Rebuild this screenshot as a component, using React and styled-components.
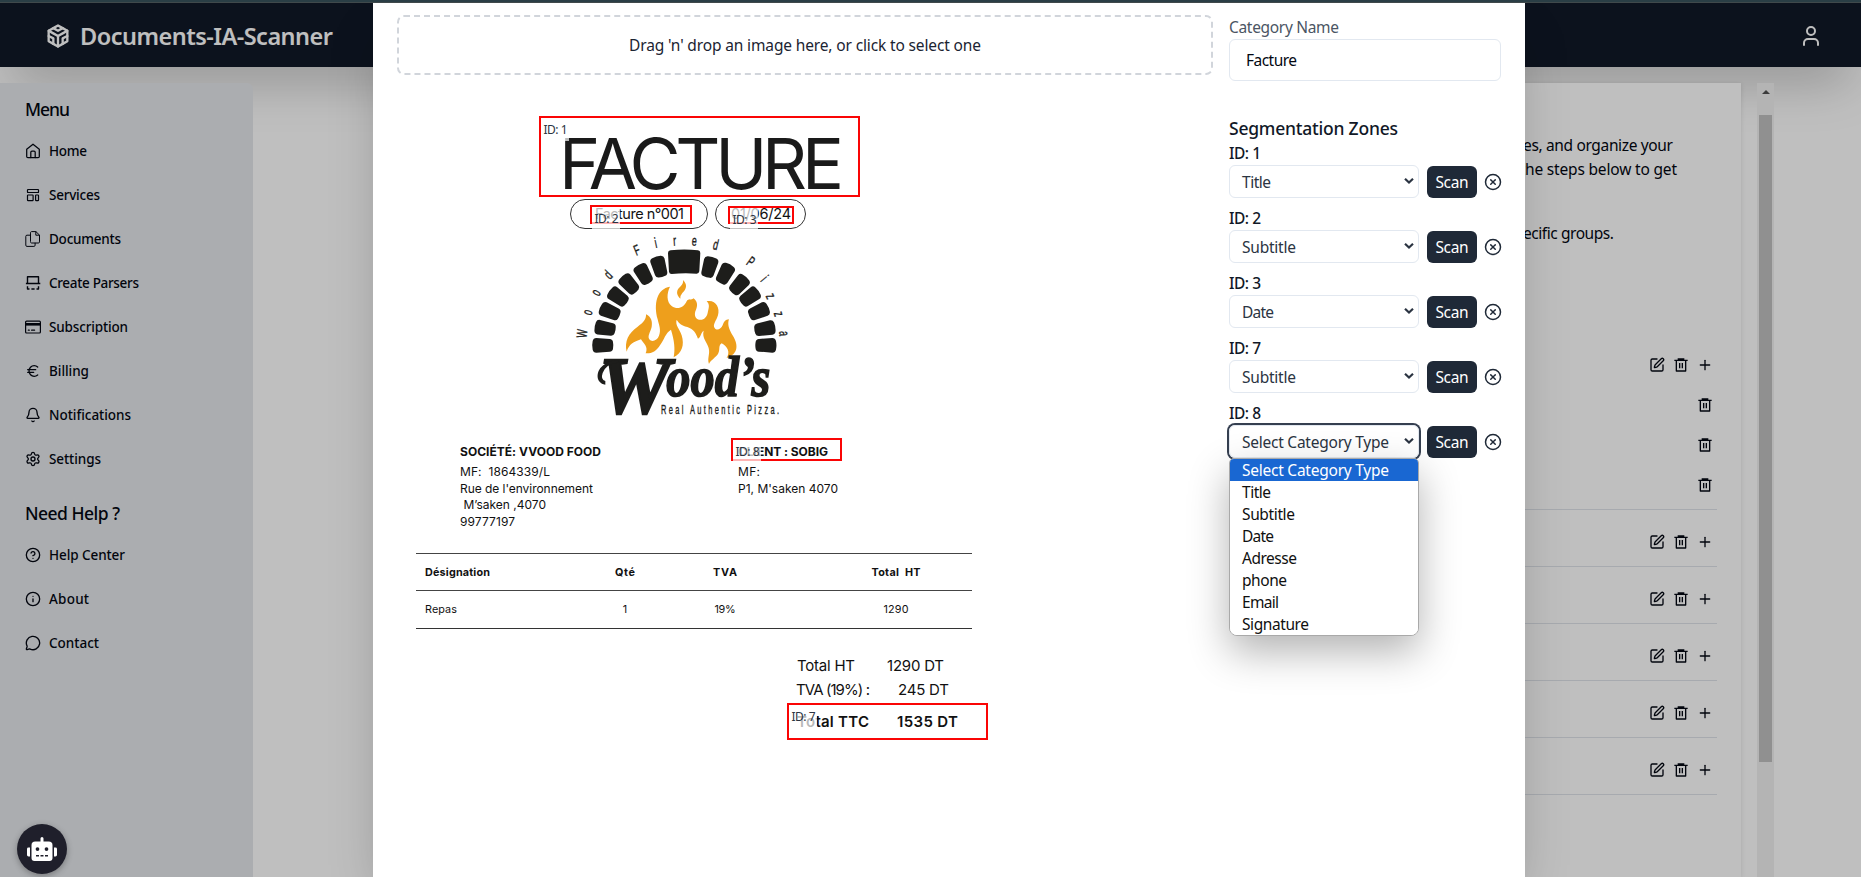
import React, { useLayoutEffect, useRef } from "react";
import styled, { createGlobalStyle, css } from "styled-components";
import { CircleHelp, Euro, Bell, Info, MessageCircle, SquarePen, Plus, User, CircleX, Settings } from "lucide-react";
import { FaRobot } from "react-icons/fa";
import { RiDeleteBin6Line } from "react-icons/ri";
import { TbBrandCodesandbox } from "react-icons/tb";

const GlobalStyle = createGlobalStyle`
  *, *::before, *::after { box-sizing: border-box; }
  body { margin: 0; overflow: hidden; background: #fff; color: #030712;
    font-family: "Noto Sans", "Open Sans", sans-serif; font-size: 15.5px; }
`;

/* Text set to a given measure by adjusting its tracking */
const Line = styled.span`
  display: inline-block;
  white-space: pre;
`;
function Fit({ w, children }) {
  const ref = useRef(null);
  useLayoutEffect(() => {
    const el = ref.current;
    el.style.letterSpacing = "0px";
    const natural = el.getBoundingClientRect().width;
    const n = el.textContent.length;
    const track = (w - natural) / Math.max(1, n - 1);
    el.style.letterSpacing = `${track}px`;
    el.style.marginRight = `${-track}px`;
  }, [w, children]);
  return <Line ref={ref}>{children}</Line>;
}

/* ---------- page behind the dialog ---------- */
const Screen = styled.div`
  position: relative;
  height: 100vh;
  width: 100vw;
  overflow: hidden;
  display: flex;
  flex-direction: column;
`;
const TopStrip = styled.div`
  position: absolute;
  z-index: 5;
  inset: 0 0 auto 0;
  height: 3px;
  background: #2a3e45;
  border-bottom: 1px solid #40494b;
`;
const Header = styled.header`
  flex: none;
  height: 67px;
  padding: 5px 38px 0 44px;
  display: flex;
  align-items: center;
  justify-content: space-between;
  background: #111827;
  color: #fff;
  box-shadow: 0 25px 50px -12px rgba(0, 0, 0, 0.25);
`;
const Brand = styled.div`
  display: flex;
  align-items: center;
  gap: 8px;
  font-size: 23.5px;
  font-weight: 600;
  line-height: 32px;
`;
const Body = styled.div`
  flex: 1;
  min-height: 0;
  margin-top: 16px;
  display: flex;
`;
const Sidebar = styled.aside`
  position: relative;
  width: 253px;
  padding: 12px 25px;
  background: #e5e7eb;
  border-top-right-radius: 6px;
`;
const MenuTitle = styled.h2`
  margin: ${(p) => (p.$second ? "18px 0 6px" : "0 0 6px")};
  font-size: 17.5px;
  font-weight: 500;
  line-height: 28px;
`;
const MenuItem = styled.div`
  height: 44px;
  display: flex;
  align-items: center;
  gap: 8px;
  font-size: 13.5px;
  font-weight: 500;
  svg { flex: none; width: 16px; height: 16px; }
`;
const Content = styled.main`
  position: relative;
  flex: 1;
  display: flex;
  justify-content: flex-end;
  gap: 16px;
  padding-right: 87px;
`;
const Card = styled.section`
  width: 1200px;
  padding: 50px 24px 0;
  background: #fff;
  box-shadow: 0 1px 5px rgba(0, 0, 0, 0.12);
`;
const Intro = styled.p`
  margin: ${(p) => p.$top || 0}px 0 0;
  padding-right: ${(p) => p.$inset}px;
  text-align: right;
  line-height: 24px;
`;
const Group = styled.div`
  border-bottom: 1px solid #dfe3ea;
  padding: ${(p) => (p.$first ? "100px 0 4px" : "8px 0 0")};
`;
const Actions = styled.div`
  height: ${(p) => (p.$tall ? 48 : 40)}px;
  padding-right: 4px;
  display: flex;
  align-items: center;
  justify-content: flex-end;
  gap: 8px;
  svg { width: 16px; height: 16px; }
`;
const ScrollTrack = styled.div`
  width: 17px;
  background: #f1f1f1;
  display: flex;
  flex-direction: column;
  align-items: center;
`;
const ScrollArrow = styled.div`
  margin: 7px 0 21px;
  border: 4px solid transparent;
  border-top: 0;
  border-bottom-color: #505050;
`;
const ScrollThumb = styled.div`
  width: 13px;
  height: 647px;
  background: #c1c1c1;
`;
const Overlay = styled.div`
  position: absolute;
  inset: 0;
  background: rgba(0, 0, 0, 0.25);
  display: flex;
  justify-content: center;
  padding: 3px 0 0 37px;
`;
const BotButton = styled.button`
  position: absolute;
  left: 17px;
  bottom: 3px;
  width: 50px;
  height: 50px;
  padding: 0;
  border: 0;
  border-radius: 50%;
  background: #1f1f2b;
  color: #fff;
  display: grid;
  place-items: center;
  box-shadow: 0 2px 6px rgba(0, 0, 0, 0.3);
  svg { width: 30px; height: 24px; }
`;

/* ---------- dialog ---------- */
const Dialog = styled.div`
  width: 1152px;
  height: 100%;
  padding: 12px 24px 0;
  background: #fff;
  display: flex;
  gap: 16px;
  box-shadow: 0 25px 50px -12px rgba(0, 0, 0, 0.25);
`;
const Preview = styled.div`
  width: 816px;
`;
const DropZone = styled.div`
  height: 60px;
  border: 2px dashed #d1d5db;
  border-radius: 7px;
  display: grid;
  place-items: center;
  color: #1b2432;
`;
const Invoice = styled.div`
  position: relative;
  width: 594px;
  padding-left: 19px;
  color: #111;
  font-family: Inter, sans-serif;
  font-size: 12px;
`;
const Heading = styled.div`
  padding: 63px 0 0 143px;
  height: 124px;
  font-size: 70px;
  line-height: 51px;
  color: #1a1a1a;
`;
const Pills = styled.div`
  display: flex;
  gap: 7px;
  margin-left: 154px;
`;
const Pill = styled.div`
  width: ${(p) => p.$w}px;
  height: 30px;
  padding-left: ${(p) => p.$pad}px;
  border: 1px solid #333;
  border-radius: 15px;
  font-size: 14.5px;
  line-height: 28px;
`;
const LogoArt = styled.svg`
  display: block;
  width: 223.3px;
  height: 188.3px;
  margin: 3px 0 0 154px;
  overflow: visible;
`;
const Parties = styled.div`
  display: grid;
  grid-template-columns: 278px 1fr;
  height: 109px;
  margin: 24px 0 0 44px;
`;
const Party = styled.div`
  display: flex;
  flex-direction: column;
  line-height: 16.5px;
  b { line-height: 16px; margin-bottom: 4px; font-weight: 700; }
`;
const TableRow = styled.div`
  display: grid;
  grid-template-columns: 9px 150px 100px 100px 242px 1fr;
  align-items: center;
  width: 556px;
  height: 37px;
  border-top: 1px solid #444;
  ${(p) => p.$last && css`height: 39px; border-bottom: 1px solid #333;`}
  font-size: 10.8px;
  font-weight: ${(p) => (p.$head ? 700 : 400)};
`;
const Cell = styled.div`
  grid-column: ${(p) => p.$col};
  text-align: ${(p) => (p.$center ? "center" : "left")};
`;
const Totals = styled.div`
  margin: 25px 0 0 380px;
  font-size: 15px;
`;
const TotalLine = styled.div`
  display: flex;
  height: ${(p) => p.$h}px;
  line-height: ${(p) => p.$h}px;
  font-weight: ${(p) => (p.$bold ? 600 : 400)};
  padding-left: ${(p) => p.$pad}px;
  gap: ${(p) => p.$gap}px;
`;
const Zone = styled.div`
  position: absolute;
  left: ${(p) => p.$x}px;
  top: ${(p) => p.$y}px;
  width: ${(p) => p.$w}px;
  height: ${(p) => p.$h}px;
  border: 2px solid #fa0505;
`;
const ZoneLabel = styled.span`
  display: block;
  width: 28px;
  height: 23px;
  padding-left: 2.5px;
  background: rgba(255, 255, 255, 0.7);
  color: #2b3442;
  font: 12px/24px "Noto Sans", sans-serif;
`;

const Panel = styled.div`
  width: 272px;
`;
const FieldLabel = styled.div`
  line-height: 24px;
  color: #4b5563;
`;
const Input = styled.div`
  height: 42px;
  padding-left: 16px;
  border: 1px solid #e2e8f0;
  border-radius: 6px;
  line-height: 41px;
`;
const PanelTitle = styled.h3`
  margin: 33px 0 0;
  font-size: 17.5px;
  font-weight: 500;
  line-height: 28px;
  color: #111827;
`;
const ZoneField = styled.div`
  height: 65px;
`;
const ZoneName = styled.div`
  font-weight: 500;
  line-height: 23px;
  color: #111827;
`;
const ZoneRow = styled.div`
  display: flex;
  align-items: center;
  gap: 8px;
  > svg { width: 18px; height: 18px; margin: 0 -1px; flex: none; color: #1f2937; }
`;
const Select = styled.div`
  position: relative;
  flex: none;
  width: 190px;
  height: 33px;
  padding: 0 4px 0 12px;
  border: 1px solid #e2e8f0;
  border-radius: 6px;
  display: flex;
  align-items: center;
  justify-content: space-between;
  color: #2b3442;
  ${(p) => p.$open && css`box-shadow: 0 0 0 2px #353f50;`}
`;
const ScanButton = styled.button`
  flex: none;
  width: 50px;
  height: 32px;
  padding: 0;
  margin-top: 1px;
  border: 0;
  border-radius: 6px;
  background: #1f2937;
  color: #fff;
  font: inherit;
`;
const Options = styled.div`
  position: absolute;
  z-index: 2;
  top: 32px;
  left: -1px;
  width: 190px;
  border: 1px solid #a9a9a9;
  border-radius: 5px 5px 8px 8px;
  overflow: hidden;
  background: #fff;
  color: #101010;
  box-shadow: 0 16px 40px rgba(0, 0, 0, 0.3);
`;
const Option = styled.div`
  height: 22px;
  padding-left: 12px;
  line-height: 22px;
  background: ${(p) => (p.$active ? "#1967d2" : "#fff")};
  color: ${(p) => (p.$active ? "#fff" : "inherit")};
`;

const stroke = { fill: "none", stroke: "currentColor", strokeLinecap: "round", strokeLinejoin: "round" };
const HomeIcon = () => (
  <svg viewBox="0 0 16 16" {...stroke} strokeWidth="1.25">
    <path d="M1.7 6.3 8 1.2l6.3 5.1v7.1c0 .8-.5 1.2-1.2 1.2H2.9c-.7 0-1.2-.4-1.2-1.2z" />
    <path d="M5.8 14.5V9.2c0-.8.4-1.2 1.2-1.2h2c.8 0 1.2.4 1.2 1.2v5.3" />
  </svg>
);
const TemplateIcon = () => (
  <svg viewBox="0 0 16 16" {...stroke} strokeWidth="1.2">
    <rect x="2.5" y="2.5" width="11" height="3" rx=".6" />
    <rect x="2.5" y="8" width="5.6" height="5.6" rx=".6" />
    <rect x="10.6" y="8" width="2.9" height="5.6" rx=".6" />
  </svg>
);
const PagesIcon = () => (
  <svg viewBox="0 0 16 16" {...stroke} strokeWidth="1">
    <path d="M5.5 1.7c0-.7.4-1.1 1.1-1.1h4.3l3.6 3.5v6.8c0 .7-.4 1.1-1.1 1.1H6.6c-.7 0-1.1-.4-1.1-1.1zM10.8.8v3.4h3.5" />
    <path d="M5.4 4.2H2c-.8 0-1.2.4-1.2 1.1v8.9c0 .8.4 1.2 1.2 1.2h6.9c.8 0 1.2-.4 1.2-1.2v-2" />
  </svg>
);
const ParserIcon = () => (
  <svg viewBox="0 0 16 16" {...stroke} strokeLinecap="butt" strokeWidth="1.4">
    <path d="M2.5 8V1.7h11V8M.9 8.5h14.4M2.5 11.3v2.7h2M13.5 11.3v2.7h-2M6.4 14h3.2" />
  </svg>
);
const CardIcon = () => (
  <svg viewBox="0 0 16 16" {...stroke} strokeWidth="1.2">
    <rect x=".6" y="2.2" width="14.8" height="11.8" rx="1" />
    <path d="M.8 5.3h14.4" strokeWidth="2.6" strokeLinecap="butt" />
    <path d="M3.3 11.2h1M6.6 11.2h3" />
  </svg>
);
const Chevron = () => (
  <svg width="10" height="7" viewBox="0 0 10 7" {...stroke} strokeLinecap="butt" strokeLinejoin="miter" strokeWidth="2.2">
    <path d="M1 .8 5 4.6l4-3.8" />
  </svg>
);

const menu = [
  ["Home", 38, HomeIcon], ["Services", 51, TemplateIcon], ["Documents", 72, PagesIcon],
  ["Create Parsers", 90, ParserIcon], ["Subscription", 79, CardIcon], ["Billing", 40, Euro],
  ["Notifications", 82, Bell], ["Settings", 52, Settings],
];
const help = [["Help Center", 76, CircleHelp], ["About", 40, Info], ["Contact", 50, MessageCircle]];

const bricks = [
  [219, 465, -90], [226, 414, -80], [240, 364, -67], [265, 320, -54], [298, 282, -42], [341, 252, -29], [388, 230, -16],
  [538, 231, 16], [585, 251, 28], [627, 284, 42], [659, 320, 54], [686, 364, 67], [704, 415, 80], [707, 465, 90],
];
const arc = [
  ["W", 157, 430, -84], ["o", 173, 366, -72], ["o", 198, 307, -60], ["d", 235, 254, -46], ["F", 321, 180, -22],
  ["i", 377, 159, -12], ["r", 434, 152, -4], ["e", 493, 152, 5], ["d", 557, 164, 14], ["P", 662, 215, 36],
  ["i", 703, 265, 50], ["z", 722, 317, 65], ["z", 747, 371, 75], ["a", 762, 430, 88],
];

const PizzaLogo = () => (
  <LogoArt viewBox="120 125 670 565" fill="#1d1d1b">
    <path d="M422 180q41-5 82 0q7 1 7 8l-3 55q-1 7-8 7q-38-3-75 1q-7 0-8-7l-3-56q0-7 8-8z" />
    {bricks.map(([x, y, a]) => (
      <path key={`${x}-${y}`} transform={`translate(${x} ${y}) rotate(${a})`}
        d="M-13-31q13-3 26 0q9 2 9 11l-3 40q-1 9-9 10q-10 2-20 0q-8-1-9-10l-3-40q0-9 9-11z" />
    ))}
    {arc.map(([c, x, y, a]) => (
      <text key={`${x}-${y}`} transform={`translate(${x} ${y}) rotate(${a}) scale(.6 1)`} y="14" textAnchor="middle"
        fontFamily="Liberation Sans Narrow, Liberation Sans, sans-serif" fontSize="44"
        stroke="#1d1d1b" strokeWidth="1.2">{c}</text>
    ))}
    <g fill="#ee9f1c">
      <path d="M459 269c14 14 11 27-2 39q-7 8-6 17c-14-13-12-26 1-37q9-9 7-19z" />
      <path d="M290 484c-7-31 5-55 33-75 17-12 26-22 25-37 16 8 20 22 17 38-4 16-13 27-7 37 8 10 24 3 29-11 7-17 0-31-4-49-13-47-2-92 37-98-10 20-11 45 5 58 17 13 37 5 45-14 5-9 15-2 20-9 12 8 14 21 8 34-7 15-2 28 9 30 14 3 23-7 26-20 3-14 8-25-3-35 26-6 41 18 34 42-5 17-17 28-10 38 6 9 19 4 24-8 4-11 8-17 19-18-5 15 0 28 8 43 21 31 22 60-15 73 12-18 2-35-15-44-12 7-2 22-13 35-13 14-20 16-25 27-6-18 4-30-1-48-4-18-21-29-15-52-8 4-8 20-17 24-7-18-12-28-32-35-18-5-25-11-32-22-5 18 9 27 15 47 9 29 1 54-24 66 5-26 2-50-8-83-17 10-20 30-32 45-13 20-25 27-44 26 9-20-7-29-14-42-22 7-36 15-43 37z" />
    </g>
    <g fontFamily="Liberation Serif, serif" fontWeight="700" fontStyle="italic" stroke="#1d1d1b">
      <text x="207" y="669" fontSize="244" textLength="214" lengthAdjust="spacingAndGlyphs" strokeWidth="7">W</text>
      <text x="409" y="616" fontSize="172" textLength="312" lengthAdjust="spacingAndGlyphs" strokeWidth="5">ood’s</text>
    </g>
    <path d="M226 583c-30-5-29-40-8-57q19-17 48-17l-2 8q-36 3-46 31q-7 20 8 24z" />
    <text transform="translate(393 671) scale(.62 1)" fontFamily="Liberation Sans Narrow, Liberation Sans, sans-serif"
      fontSize="36" textLength="572" stroke="#1d1d1b" strokeWidth="1">Real Authentic Pizza.</text>
  </LogoArt>
);

/* positions are relative to the scanned page */
const zones = [
  [1, 142, 41, 321, 81], [2, 193, 130, 102, 19], [3, 331, 131, 66, 18], [8, 334, 363, 111, 23], [7, 390, 628, 201, 37],
];
const fields = [[1, "Title", 29], [2, "Subtitle", 54], [3, "Date", 32], [7, "Subtitle", 54], [8, "Select Category Type", 147]];
const options = [["Select Category Type", 147], ["Title", 29], ["Subtitle", 53], ["Date", 32], ["Adresse", 55], ["phone", 45], ["Email", 37], ["Signature", 67]];

const MenuList = ({ items }) => items.map(([name, w, Icon]) => (
  <MenuItem key={name}><Icon /><Fit w={w}>{name}</Fit></MenuItem>
));

export default function App() {
  return (
    <Screen>
      <GlobalStyle />
      <TopStrip />
      <Header>
        <Brand><TbBrandCodesandbox size={28} /><Fit w={253}>Documents-IA-Scanner</Fit></Brand>
        <User size={24} />
      </Header>
      <Body>
        <Sidebar>
          <MenuTitle><Fit w={45}>Menu</Fit></MenuTitle>
          <MenuList items={menu} />
          <MenuTitle $second><Fit w={95}>Need Help ?</Fit></MenuTitle>
          <MenuList items={help} />
        </Sidebar>
        <Content>
          <Card>
            <Intro $inset={44}>categori<Fit w={150}>es, and organize your</Fit></Intro>
            <Intro $inset={40}>follow t<Fit w={152}>he steps below to get</Fit></Intro>
            <Intro $inset={103} $top={40}>sp<Fit w={91}>ecific groups.</Fit></Intro>
            <Group $first>
              <Actions><SquarePen /><RiDeleteBin6Line /><Plus /></Actions>
              {[1, 2, 3].map((n) => <Actions key={n}><RiDeleteBin6Line /></Actions>)}
            </Group>
            {[1, 2, 3, 4, 5].map((n) => (
              <Group key={n}><Actions $tall><SquarePen /><RiDeleteBin6Line /><Plus /></Actions></Group>
            ))}
          </Card>
          <ScrollTrack><ScrollArrow /><ScrollThumb /></ScrollTrack>
        </Content>
      </Body>
      <Overlay>
        <Dialog>
          <Preview>
            <DropZone><Fit w={352}>Drag 'n' drop an image here, or click to select one</Fit></DropZone>
            <Invoice>
              <Heading><Fit w={285}>FACTURE</Fit></Heading>
              <Pills>
                <Pill $w={138} $pad={24}><Fit w={89}>Facture n°001</Fit></Pill>
                <Pill $w={91} $pad={15}><Fit w={60}>01/06/24</Fit></Pill>
              </Pills>
              <PizzaLogo />
              <Parties>
                <Party>
                  <b><Fit w={141}>SOCIÉTÉ: VVOOD FOOD</Fit></b>
                  <div><Fit w={90}>MF:  1864339/L</Fit></div>
                  <div><Fit w={133}>Rue de l'environnement</Fit></div>
                  <div><Fit w={86}> M’saken ,4070</Fit></div>
                  <div><Fit w={55}>99777197</Fit></div>
                </Party>
                <Party>
                  <b><Fit w={90}>CLIENT : SOBIG</Fit></b>
                  <div><Fit w={22}>MF:</Fit></div>
                  <div><Fit w={100}>P1, M'saken 4070</Fit></div>
                </Party>
              </Parties>
              <TableRow $head>
                <Cell $col={2}><Fit w={65}>Désignation</Fit></Cell>
                <Cell $col={3} $center><Fit w={20}>Qté</Fit></Cell>
                <Cell $col={4} $center><Fit w={24}>TVA</Fit></Cell>
                <Cell $col={5} $center><Fit w={49}>Total  HT</Fit></Cell>
              </TableRow>
              <TableRow $last>
                <Cell $col={2}><Fit w={32}>Repas</Fit></Cell>
                <Cell $col={3} $center>1</Cell>
                <Cell $col={4} $center><Fit w={21}>19%</Fit></Cell>
                <Cell $col={5} $center><Fit w={25}>1290</Fit></Cell>
              </TableRow>
              <Totals>
                <TotalLine $h={24} $pad={1} $gap={32}><Fit w={58}>Total HT</Fit><Fit w={57}>1290 DT</Fit></TotalLine>
                <TotalLine $h={24} $pad={0} $gap={28}><Fit w={74}>TVA (19%) :</Fit><Fit w={51}>245 DT</Fit></TotalLine>
                <TotalLine $h={40} $pad={1} $gap={28} $bold><Fit w={72}>Total TTC</Fit><Fit w={61}>1535 DT</Fit></TotalLine>
              </Totals>
              {zones.map(([id, x, y, w, h]) => (
                <Zone key={id} $x={x} $y={y} $w={w} $h={h}><ZoneLabel><Fit w={24}>{`ID: ${id}`}</Fit></ZoneLabel></Zone>
              ))}
            </Invoice>
          </Preview>
          <Panel>
            <FieldLabel><Fit w={110}>Category Name</Fit></FieldLabel>
            <Input><Fit w={51}>Facture</Fit></Input>
            <PanelTitle><Fit w={169}>Segmentation Zones</Fit></PanelTitle>
            {fields.map(([id, value, w]) => (
              <ZoneField key={id}>
                <ZoneName><Fit w={32}>{`ID: ${id}`}</Fit></ZoneName>
                <ZoneRow>
                  <Select $open={id === 8}>
                    <Fit w={w}>{value}</Fit>
                    <Chevron />
                    {id === 8 && (
                      <Options>
                        {options.map(([name, ow], i) => (
                          <Option key={name} $active={i === 0}><Fit w={ow}>{name}</Fit></Option>
                        ))}
                      </Options>
                    )}
                  </Select>
                  <ScanButton><Fit w={33}>Scan</Fit></ScanButton>
                  <CircleX />
                </ZoneRow>
              </ZoneField>
            ))}
          </Panel>
        </Dialog>
      </Overlay>
      <BotButton><FaRobot /></BotButton>
    </Screen>
  );
}
